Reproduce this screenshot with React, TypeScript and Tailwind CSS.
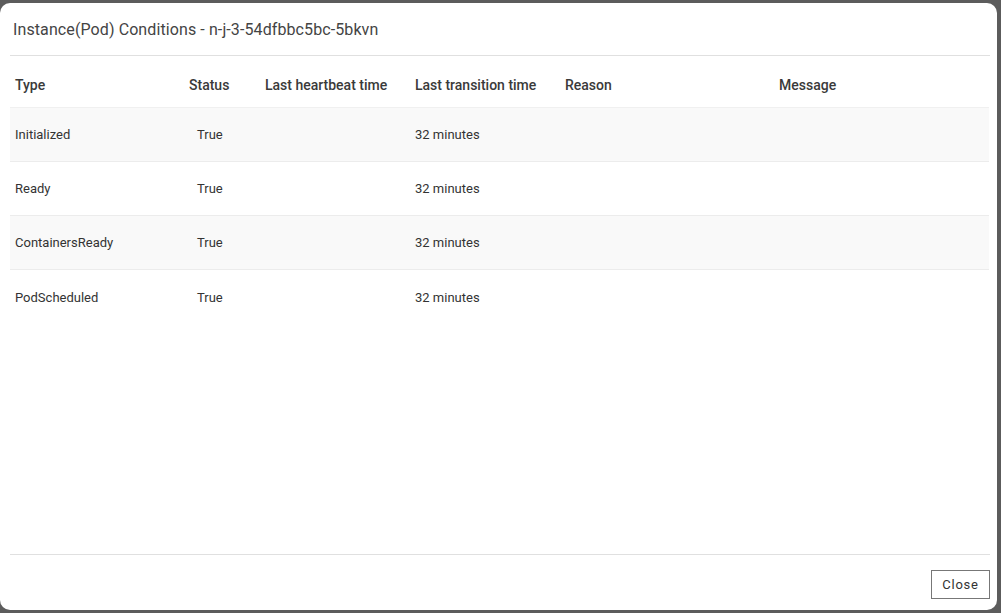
import React from "react";

const rows = [
  { type: "Initialized", status: "True", time: "32 minutes" },
  { type: "Ready", status: "True", time: "32 minutes" },
  { type: "ContainersReady", status: "True", time: "32 minutes" },
  { type: "PodScheduled", status: "True", time: "32 minutes" },
];

export default function App() {
  return (
    <div
      className="w-[1001px] h-[613px] bg-[#5c5c5c] pt-[3px] pr-[4px] pb-[3px] flex"
      style={{ fontFamily: "Roboto, 'Liberation Sans', sans-serif" }}
    >
      <div className="flex-1 bg-white rounded-[10px] flex flex-col">
        <div className="h-[52px] flex items-center pt-[2px] pl-[13px] text-[16px] tracking-[0.1px] text-[#444] shrink-0">
          Instance(Pod) Conditions - n-j-3-54dfbbc5bc-5bkvn
        </div>
        <div className="ml-[10px] mr-[7px] border-t border-[#e0e0e0]" />
        <div className="flex-1 ml-[10px] mr-[8px]">
          <div className="h-[52px] pt-[19px] flex text-[14px] font-medium text-[#3a3a3a] leading-[20px] border-b border-[#f0f0f0]">
            <div className="w-[174px] pl-[5px]">Type</div>
            <div className="w-[76px] pl-[5px]">Status</div>
            <div className="w-[150px] pl-[5px]">Last heartbeat time</div>
            <div className="w-[150px] pl-[5px]">Last transition time</div>
            <div className="w-[214px] pl-[5px]">Reason</div>
            <div className="flex-1 pl-[5px]">Message</div>
          </div>
          {rows.map((r, i) => (
            <div
              key={r.type}
              className={
                "h-[54px] flex items-center pt-[1px] text-[13px] text-[#333] " +
                (i < rows.length - 1 ? "border-b border-[#ececec] " : "") +
                (i % 2 === 0 ? "bg-[#f9f9f9]" : "bg-white")
              }
            >
              <div className="w-[174px] pl-[5px]">{r.type}</div>
              <div className="w-[76px] pl-[13px]">{r.status}</div>
              <div className="w-[150px] pl-[5px]"></div>
              <div className="w-[150px] pl-[5px]">{r.time}</div>
              <div className="w-[214px] pl-[5px]"></div>
              <div className="flex-1 pl-[5px]"></div>
            </div>
          ))}
        </div>
        <div className="ml-[10px] mr-[7px] border-t border-[#e0e0e0]" />
        <div className="flex justify-end pt-[15px] pb-[11px] pr-[7px] shrink-0">
          <button className="w-[59px] h-[29px] pt-[1px] border border-[#777] text-[13px] text-[#333] tracking-[0.8px] bg-white">
            Close
          </button>
        </div>
      </div>
    </div>
  );
}
